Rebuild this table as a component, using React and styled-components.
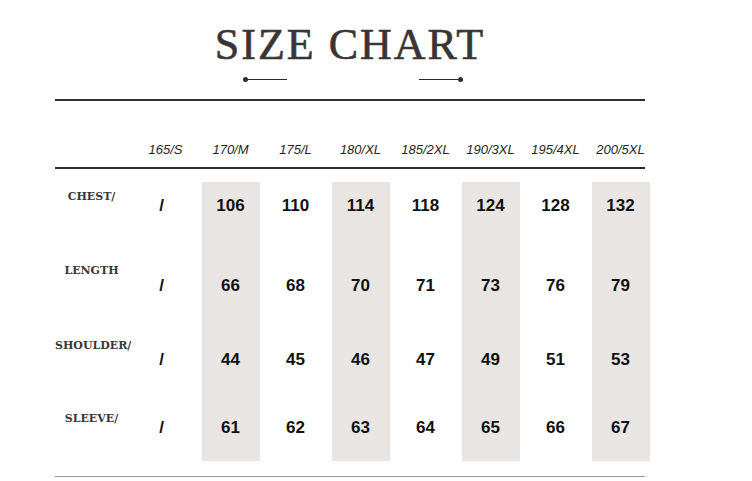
import React from 'react';
import styled, { createGlobalStyle } from 'styled-components';

const GlobalStyle = createGlobalStyle`
  html, body {
    margin: 0;
    padding: 0;
    background: #ffffff;
  }
  body {
    width: 752px;
    height: 481px;
    overflow: hidden;
    font-family: "Liberation Sans", Arial, sans-serif;
  }
`;

const Sheet = styled.div`
  width: 590px;
  margin-left: 55px;
`;

const Title = styled.h1`
  margin: 0;
  padding-top: 23px;
  font-family: "Liberation Serif", "Times New Roman", serif;
  font-weight: normal;
  font-size: 44px;
  line-height: 43px;
  letter-spacing: 2px;
  text-align: center;
  color: #3a3533;
  -webkit-text-stroke: 0.6px #3a3533;
`;

const Ornament = styled.div`
  display: flex;
  justify-content: center;
  align-items: center;
  gap: 132px;
  height: 6px;
  margin-top: 10px;
  padding-left: 6px;
`;

const Flourish = styled.div`
  display: flex;
  align-items: center;
  flex-direction: ${(p) => (p.$flip ? 'row-reverse' : 'row')};
`;

const Dot = styled.span`
  width: 5px;
  height: 5px;
  border-radius: 50%;
  background: #2f2b2a;
`;

const Stroke = styled.span`
  width: 39px;
  height: 1px;
  background: #2f2b2a;
`;

const Rule = styled.div`
  height: ${(p) => p.$weight || 2}px;
  margin-top: ${(p) => p.$gap || 0}px;
  background: ${(p) => p.$color || '#2e2e2e'};
`;

const Grid = styled.div`
  display: grid;
  grid-template-columns: 78px repeat(8, 65px);
  height: ${(p) => p.$h}px;
`;

const HeaderGrid = styled(Grid)`
  align-items: end;
  padding-bottom: 9px;
  box-sizing: border-box;
`;

const SizeHead = styled.div`
  text-align: center;
  font-style: italic;
  font-size: 13px;
  line-height: 16px;
  color: #262626;
  white-space: nowrap;
`;

const Body = styled.div`
  margin-top: 13px;
`;

const Label = styled.div`
  padding-top: ${(p) => p.$top}px;
  padding-right: 5px;
  text-align: center;
  font-family: "DejaVu Serif", "Liberation Serif", serif;
  font-weight: bold;
  font-size: 11px;
  line-height: 14px;
  color: #383838;
  white-space: nowrap;
`;

const Cell = styled.div`
  justify-self: center;
  width: 58px;
  padding-top: 14px;
  box-sizing: border-box;
  text-align: center;
  background: ${(p) => (p.$shade ? '#e8e5e3' : 'transparent')};
  font-weight: bold;
  font-size: 17px;
  line-height: 20px;
  color: #111;
`;

const Slash = styled(Cell)`
  padding-right: 8px;
`;

const sizes = ['165/S', '170/M', '175/L', '180/XL', '185/2XL', '190/3XL', '195/4XL', '200/5XL'];

const rows = [
  { label: 'CHEST/', h: 80, top: 8, values: [106, 110, 114, 118, 124, 128, 132] },
  { label: 'LENGTH', h: 74, top: 2, values: [66, 68, 70, 71, 73, 76, 79] },
  { label: 'SHOULDER/', h: 68, top: 3, values: [44, 45, 46, 47, 49, 51, 53] },
  { label: 'SLEEVE/', h: 57, top: 8, values: [61, 62, 63, 64, 65, 66, 67] },
];

const App = () => (
  <>
    <GlobalStyle />
    <Sheet>
      <Title>SIZE CHART</Title>
      <Ornament>
        <Flourish>
          <Dot />
          <Stroke />
        </Flourish>
        <Flourish $flip>
          <Dot />
          <Stroke />
        </Flourish>
      </Ornament>
      <Rule $gap={17} />
      <HeaderGrid $h={66}>
        <span />
        {sizes.map((s) => (
          <SizeHead key={s}>{s}</SizeHead>
        ))}
      </HeaderGrid>
      <Rule />
      <Body>
        {rows.map((row) => (
          <Grid key={row.label} $h={row.h}>
            <Label $top={row.top}>{row.label}</Label>
            <Slash>/</Slash>
            {row.values.map((v, i) => (
              <Cell key={i} $shade={i % 2 === 0}>{v}</Cell>
            ))}
          </Grid>
        ))}
      </Body>
      <Rule $gap={15} $weight={1} $color="#9c9c9c" />
    </Sheet>
  </>
);

export default App;
